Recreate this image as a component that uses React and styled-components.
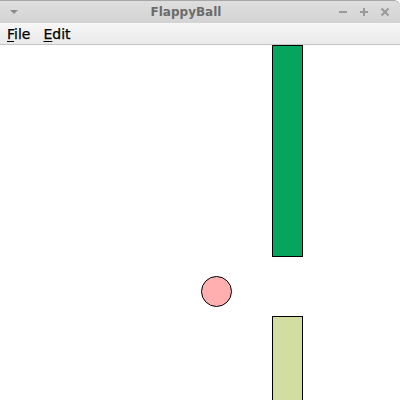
import React from 'react';
import styled, { createGlobalStyle } from 'styled-components';

const GlobalStyle = createGlobalStyle`
  html, body {
    margin: 0;
    padding: 0;
    background: #ffffff;
  }
`;

const Window = styled.div`
  width: 400px;
  height: 400px;
  display: flex;
  flex-direction: column;
  overflow: hidden;
  font-family: "DejaVu Sans", "Liberation Sans", sans-serif;
  background: #ffffff;
`;

const TitleBar = styled.div`
  height: 23px;
  flex: none;
  display: flex;
  align-items: center;
  justify-content: space-between;
  padding: 0 9px 0 9px;
  background: linear-gradient(#dedede, #d3d3d3);
  border-top: 1px solid #a8a8a8;
  border-radius: 0 6px 0 0;
  box-sizing: border-box;
`;

const Title = styled.span`
  font-size: 12px;
  font-weight: bold;
  color: #6b6b6b;
  margin-left: 16px;
`;

const Controls = styled.div`
  display: flex;
  gap: 9px;
  align-items: center;
`;

const MenuBar = styled.div`
  height: 22px;
  flex: none;
  display: flex;
  align-items: center;
  gap: 13px;
  padding: 0 7px;
  background: linear-gradient(#f7f7f7, #e9e9e9);
  border-bottom: 1px solid #c4c4c4;
  box-sizing: border-box;
`;

const MenuItem = styled.span`
  font-size: 14px;
  color: #000;
  -webkit-text-stroke: 0.25px #000;
  u { text-decoration: underline; text-underline-offset: 2px; }
`;

const Canvas = styled.div`
  flex: 1;
  display: grid;
  grid-template-columns: 201px 30px 41px 31px 1fr;
  grid-template-rows: 212px 19px 30px 10px 1fr;
`;

const Pipe = styled.div`
  grid-column: 4;
  grid-row: ${p => p.$row};
  background: ${p => p.$color};
  border: 1px solid #000;
  border-bottom: ${p => (p.$open ? 'none' : '1px solid #000')};
  box-sizing: border-box;
`;

const Ball = styled.div`
  grid-column: 2;
  grid-row: 3;
  width: 31px;
  height: 31px;
  border-radius: 50%;
  background: #ffafaf;
  border: 1px solid #000;
  box-sizing: border-box;
`;

const Glyph = ({ kind }) => {
  if (kind === 'menu') {
    return (
      <svg width="10" height="6" viewBox="0 0 10 6">
        <path d="M1 1 L9 1 L5 5 Z" fill="#8a8a8a" />
      </svg>
    );
  }
  if (kind === 'min') {
    return (
      <svg width="12" height="12" viewBox="0 0 12 12">
        <path d="M2 6 H10" stroke="#999" strokeWidth="2" />
      </svg>
    );
  }
  if (kind === 'max') {
    return (
      <svg width="12" height="12" viewBox="0 0 12 12">
        <path d="M2 6 H10 M6 2 V10" stroke="#999" strokeWidth="2" />
      </svg>
    );
  }
  return (
    <svg width="12" height="12" viewBox="0 0 12 12">
      <path d="M2.5 2.5 L9.5 9.5 M9.5 2.5 L2.5 9.5" stroke="#999" strokeWidth="2" />
    </svg>
  );
};

export default function App() {
  return (
    <>
      <GlobalStyle />
      <Window>
        <TitleBar>
          <Glyph kind="menu" />
          <Title>FlappyBall</Title>
          <Controls>
            <Glyph kind="min" />
            <Glyph kind="max" />
            <Glyph kind="close" />
          </Controls>
        </TitleBar>
        <MenuBar>
          <MenuItem><u>F</u>ile</MenuItem>
          <MenuItem><u>E</u>dit</MenuItem>
        </MenuBar>
        <Canvas>
          <Pipe $row="1" $color="#06a55e" />
          <Ball />
          <Pipe $row="5" $color="#d2dea1" $open />
        </Canvas>
      </Window>
    </>
  );
}
